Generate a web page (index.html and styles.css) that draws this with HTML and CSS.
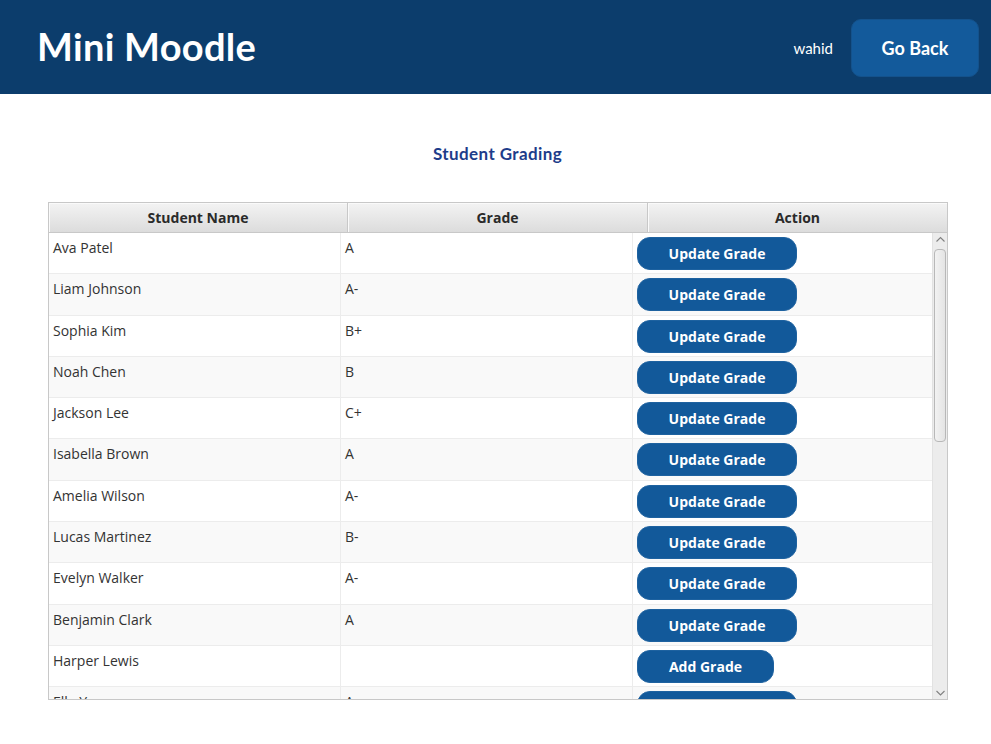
FILE: index.html
```html
<!DOCTYPE html>
<html>
<head>
<meta charset="utf-8">
<link rel="stylesheet" href="styles.css">
</head>
<body>
<header class="topbar">
  <h1 class="brand">Mini Moodle</h1>
  <div class="user-area">
    <span class="username">wahid</span>
    <button class="back-btn">Go Back</button>
  </div>
</header>
<main class="content">
  <h2 class="page-title">Student Grading</h2>
  <div class="table">
    <div class="thead">
      <div class="th">Student Name</div>
      <div class="th">Grade</div>
      <div class="th">Action</div>
    </div>
    <div class="tbody-wrap">
      <div class="tbody">
        <div class="row"><div class="cell">Ava Patel</div><div class="cell">A</div><div class="cell act"><button class="btn">Update Grade</button></div></div>
        <div class="row alt"><div class="cell">Liam Johnson</div><div class="cell">A-</div><div class="cell act"><button class="btn">Update Grade</button></div></div>
        <div class="row"><div class="cell">Sophia Kim</div><div class="cell">B+</div><div class="cell act"><button class="btn">Update Grade</button></div></div>
        <div class="row alt"><div class="cell">Noah Chen</div><div class="cell">B</div><div class="cell act"><button class="btn">Update Grade</button></div></div>
        <div class="row"><div class="cell">Jackson Lee</div><div class="cell">C+</div><div class="cell act"><button class="btn">Update Grade</button></div></div>
        <div class="row alt"><div class="cell">Isabella Brown</div><div class="cell">A</div><div class="cell act"><button class="btn">Update Grade</button></div></div>
        <div class="row"><div class="cell">Amelia Wilson</div><div class="cell">A-</div><div class="cell act"><button class="btn">Update Grade</button></div></div>
        <div class="row alt"><div class="cell">Lucas Martinez</div><div class="cell">B-</div><div class="cell act"><button class="btn">Update Grade</button></div></div>
        <div class="row"><div class="cell">Evelyn Walker</div><div class="cell">A-</div><div class="cell act"><button class="btn">Update Grade</button></div></div>
        <div class="row alt"><div class="cell">Benjamin Clark</div><div class="cell">A</div><div class="cell act"><button class="btn">Update Grade</button></div></div>
        <div class="row"><div class="cell">Harper Lewis</div><div class="cell"></div><div class="cell act"><button class="btn add">Add Grade</button></div></div>
        <div class="row alt"><div class="cell">Ella Young</div><div class="cell">A</div><div class="cell act"><button class="btn">Update Grade</button></div></div>
      </div>
      <div class="scrollbar">
        <svg class="arrow" width="15" height="12" viewBox="0 0 15 12"><path d="M3.5 8.5 L7.5 4.5 L11.5 8.5" fill="none" stroke="#808080" stroke-width="1.1"/></svg>
        <div class="track"><div class="thumb"></div></div>
        <svg class="arrow" width="15" height="12" viewBox="0 0 15 12"><path d="M3.5 4 L7.5 8 L11.5 4" fill="none" stroke="#808080" stroke-width="1.1"/></svg>
      </div>
    </div>
  </div>
</main>
</body>
</html>
```
FILE: styles.css
```css
* { box-sizing: border-box; }
html, body { margin: 0; padding: 0; background: #fff; }
body { font-family: "Open Sans", "Noto Sans", sans-serif; color: #333; }

.topbar {
  height: 94px;
  background: #0c3d6c;
  display: flex;
  align-items: center;
  justify-content: space-between;
  padding: 0 12px 0 37px;
}
.brand {
  margin: 0;
  color: #fff;
  font-family: "Lato", sans-serif;
  font-weight: 700;
  font-size: 38px;
  letter-spacing: 0.3px;
  padding-bottom: 2px;
}
.user-area { display: flex; align-items: center; gap: 18px; }
.username {
  color: #fff;
  font-family: "Lato", sans-serif;
  font-size: 15px;
  margin-top: 2px;
}
.back-btn {
  width: 128px;
  height: 58px;
  border: 1px solid #14528c;
  border-radius: 10px;
  background: #135a9b;
  color: #fff;
  font-family: "Lato", sans-serif;
  font-weight: 700;
  font-size: 18px;
  margin-top: 2px;
}

.content { padding: 0 44px 0 48px; }
.page-title {
  margin: 0;
  padding-top: 49px;
  height: 108px;
  text-align: center;
  font-family: "Lato", sans-serif;
  font-weight: 700;
  font-size: 17px;
  color: #1d3c8a;
  letter-spacing: 0.4px;
}

.table {
  width: 900px;
  border: 1px solid #c8c8c8;
}
.thead {
  display: grid;
  grid-template-columns: 299px 300px 299px;
  height: 30px;
  border-bottom: 1px solid #c8c8c8;
}
.th {
  background: linear-gradient(#f3f3f3, #dcdcdc);
  border-right: 1px solid #c8c8c8;
  box-shadow: inset 1px 1px 0 #fafafa;
  display: flex;
  align-items: center;
  justify-content: center;
  font-weight: 700;
  font-size: 14px;
  color: #2a2a2a;
}
.th:last-child { border-right: none; }

.tbody-wrap {
  display: flex;
  height: 466px;
  overflow: hidden;
}
.tbody { width: 883px; }
.row {
  display: grid;
  grid-template-columns: 292px 292px 299px;
  height: 41.3px;
  background: #fff;
  border-bottom: 1px solid #ececec;
}
.row.alt { background: #f9f9f9; }
.cell {
  padding: 5px 0 0 4px;
  font-size: 14px;
  color: #333;
  border-right: 1px solid #ececec;
  line-height: 20px;
}
.cell.act { border-right: none; padding: 4px 0 0 4px; }
.btn {
  width: 160px;
  height: 33px;
  border: 1px solid #1e62a0;
  border-radius: 13px;
  background: #12599a;
  color: #fff;
  font-family: "Open Sans", sans-serif;
  font-weight: 700;
  font-size: 14px;
  padding: 0;
}
.btn.add { width: 137px; }

.scrollbar {
  width: 15px;
  background: #ececec;
  border-left: 1px solid #e2e2e2;
  display: flex;
  flex-direction: column;
}
.arrow { display: block; flex: none; }
.track { flex: 1; padding: 4px 1px; }
.thumb {
  height: 193px;
  border: 1px solid #b8b8b8;
  border-radius: 4px;
  background: linear-gradient(90deg, #f2f2f2, #e4e4e4);
}
```
